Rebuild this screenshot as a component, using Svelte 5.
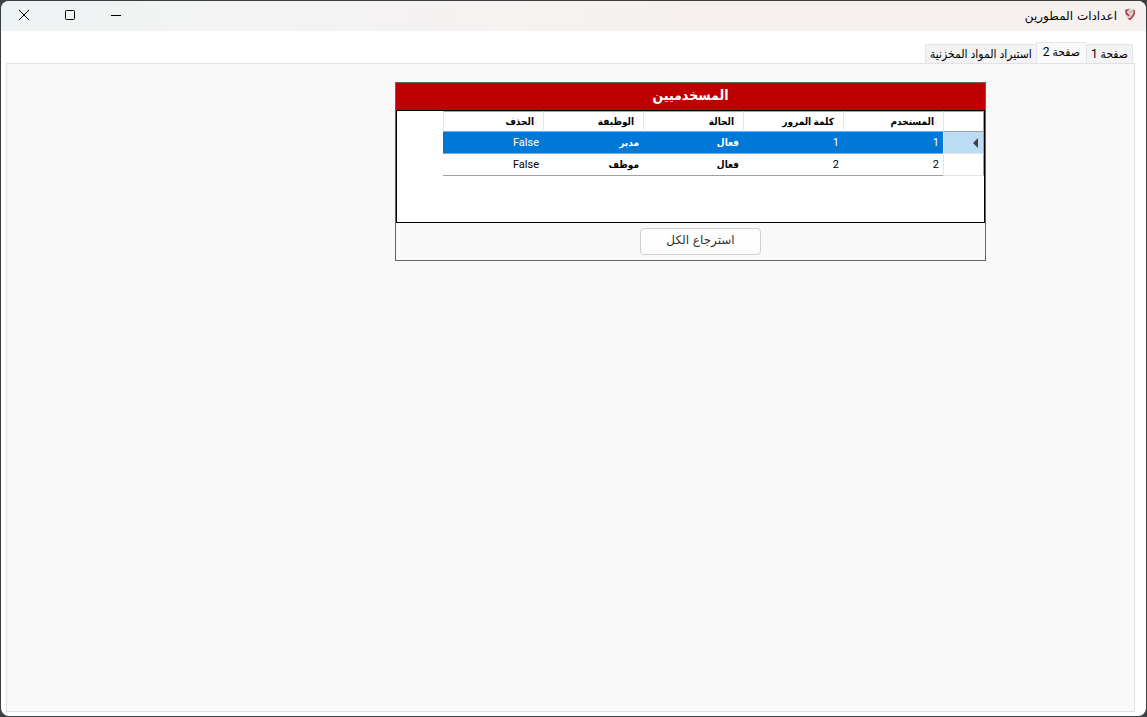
<script lang="ts">
type Tab = { id: string; label: string };
type User = { name: string; password: string; status: string; role: string; deleted: boolean };

const tabs: Tab[] = [
  { id: "page1", label: "صفحة 1" },
  { id: "page2", label: "صفحة 2" },
  { id: "import", label: "استيراد المواد المخزنية" },
];

const columns = ["المستخدم", "كلمة المرور", "الحالة", "الوظيفة", "الحذف"];

const users: User[] = [
  { name: "1", password: "1", status: "فعال", role: "مدير", deleted: false },
  { name: "2", password: "2", status: "فعال", role: "موظف", deleted: false },
];

let activeTab = $state("page2");
let selectedRow = $state(0);
</script>

<div class="window" dir="rtl">
  <header class="titlebar">
    <svg class="app-icon" viewBox="0 0 12 13" aria-hidden="true">
      <path d="M1 2.2 5.4.6 10.6 2 11 5.6 9.4 9 6 12.4 3 9.8 1.2 6z" fill="#e3d0d1" />
      <path d="M1 2.2 5.4.6 4.2 2.6 2.6 3.2 3.6 5.6 5.6 7 5 8.4 2 6.6z" fill="#9c3b45" />
      <path d="M8.4 1.4 10.8 2.2 11 5.6 9.6 8.6 6 12.4 3.4 10 5.8 10.2 8.2 7.6 9.4 5 9.4 3z" fill="#a9444d" />
      <path d="M5.6 3.4 7.6 2.8 7.6 4.4 6.2 5z" fill="#c9999d" />
    </svg>
    <h1>اعدادات المطورين</h1>
    <div class="window-buttons">
      <button type="button" aria-label="تصغير">
        <svg viewBox="0 0 12 12"><path d="M1 6.5h10" /></svg>
      </button>
      <button type="button" aria-label="تكبير">
        <svg viewBox="0 0 12 12"><rect x="1.5" y="1.5" width="9" height="9" rx="1" /></svg>
      </button>
      <button type="button" aria-label="إغلاق">
        <svg viewBox="0 0 12 12"><path d="M1 1l10 10M11 1L1 11" /></svg>
      </button>
    </div>
  </header>

  <div class="tabs" role="tablist">
    {#each tabs as tab}
      <button
        type="button"
        role="tab"
        class="tab"
        class:active={activeTab === tab.id}
        aria-selected={activeTab === tab.id}
        onclick={() => (activeTab = tab.id)}
      >{tab.label}</button>
    {/each}
  </div>

  <main class="page" role="tabpanel">
    {#if activeTab === "page2"}
      <section class="panel">
        <h2>المسخدميين</h2>
        <div class="grid">
          <table>
            <thead>
              <tr>
                <th class="row-head"></th>
                {#each columns as column}
                  <th>{column}</th>
                {/each}
              </tr>
            </thead>
            <tbody>
              {#each users as user, i}
                <tr class:selected={selectedRow === i} onclick={() => (selectedRow = i)}>
                  <td class="row-head">
                    {#if selectedRow === i}
                      <svg class="marker" viewBox="0 0 5 10"><path d="M5 0v10L0 5z" /></svg>
                    {/if}
                  </td>
                  <td>{user.name}</td>
                  <td>{user.password}</td>
                  <td class="word">{user.status}</td>
                  <td class="word">{user.role}</td>
                  <td>{user.deleted ? "True" : "False"}</td>
                </tr>
              {/each}
            </tbody>
          </table>
        </div>
        <div class="actions">
          <button type="button" class="restore">استرجاع الكل</button>
        </div>
      </section>
    {/if}
  </main>
</div>

<style>
:global(body) {
    margin: 0;
    background: #3c4043;
}

:global(#app) {
    padding: 1px 0;
}

.window {
    box-sizing: border-box;
    min-height: calc(100vh - 2px);
    margin: 0 1px;
    border-radius: 8px;
    background: #fff;
    overflow: hidden;
    display: flex;
    flex-direction: column;
    font-family: Roboto, "DejaVu Sans Condensed", "DejaVu Sans", sans-serif;
    font-size: 11px;
    color: #000;
}

button {
    font: inherit;
    color: inherit;
}

.titlebar {
    display: flex;
    align-items: center;
    height: 30px;
    padding-right: 10px;
    background: linear-gradient(to right, #eef3f3, #f3f3f3 20%, #f6f1ef 60%);
}

.app-icon {
    width: 12px;
    height: 13px;
    margin-bottom: 4px;
}

h1 {
    margin: 0 7px 0 0;
    font-family: "DejaVu Sans", sans-serif;
    font-size: 12px;
    font-weight: normal;
}

.window-buttons {
    display: flex;
    align-self: flex-start;
    margin-right: auto;
}

.window-buttons button {
    width: 46px;
    height: 28px;
    padding: 0;
    border: 0;
    background: none;
    display: flex;
    align-items: center;
    justify-content: center;
}

.window-buttons svg {
    width: 12px;
    height: 12px;
    fill: none;
    stroke: #000;
    stroke-width: 1;
}

.tabs {
    display: flex;
    align-items: flex-end;
    height: 32px;
    padding-right: 13px;
}

.tab {
    box-sizing: border-box;
    height: 19px;
    padding: 0 4px;
    border: 1px solid #e5e5e5;
    border-bottom: 0;
    background: #f3f3f3;
    font-size: 12px;
    white-space: nowrap;
    line-height: 16px;
}

.tab + .tab {
    border-right: 0;
}

.tab.active {
    height: 21px;
    padding: 0 6px 2px;
    background: #f9f9f9;
}

.page {
    flex: 1;
    margin: 0 11px 4px 5px;
    padding: 18px 148px;
    border: 1px solid #e2e2e2;
    background: #f9f9f9;
}

.panel {
    width: 589px;
    border: 1px solid #646464;
}

h2 {
    margin: 0;
    height: 27px;
    line-height: 24px;
    background: #c00000;
    color: #fff;
    font-size: 14px;
    text-align: center;
}

.grid {
    height: 111px;
    border: 1px solid #000;
    background: #fff;
}

table {
    table-layout: fixed;
    width: 541px;
    border-collapse: separate;
    border-spacing: 0;
}

th,
td {
    box-sizing: border-box;
    height: 22px;
    padding: 1px 4px 0;
    border-bottom: 1px solid #a0a0a0;
    text-align: right;
    line-height: 16px;
    white-space: nowrap;
}

th {
    height: 21px;
    padding: 0 9px;
    border-top: 1px solid #a0a0a0;
    border-left: 1px solid #e5e5e5;
    font-size: 10px;
    font-weight: bold;
}

.word {
    padding-top: 0;
    font-size: 10px;
    font-weight: bold;
}

.row-head {
    width: 41px;
    padding: 0 5px;
    border-left: 1px solid #e5e5e5;
    border-right: 1px solid #a0a0a0;
}

td.row-head {
    border-bottom-color: #e5e5e5;
}

.selected td {
    background: #0078d7;
    color: #fff;
}

.selected .row-head {
    background: #bcdcf4;
}

.marker {
    display: block;
    width: 5px;
    height: 10px;
    fill: #404040;
}

.actions {
    padding: 5px 224px;
}

.restore {
    display: block;
    width: 121px;
    height: 27px;
    padding: 0 0 3px;
    border: 1px solid #d0d0d0;
    border-radius: 4px;
    background: #fdfdfd;
    color: #333;
    font-family: "DejaVu Sans", sans-serif;
    font-size: 12px;
    line-height: 20px;
}
</style>
